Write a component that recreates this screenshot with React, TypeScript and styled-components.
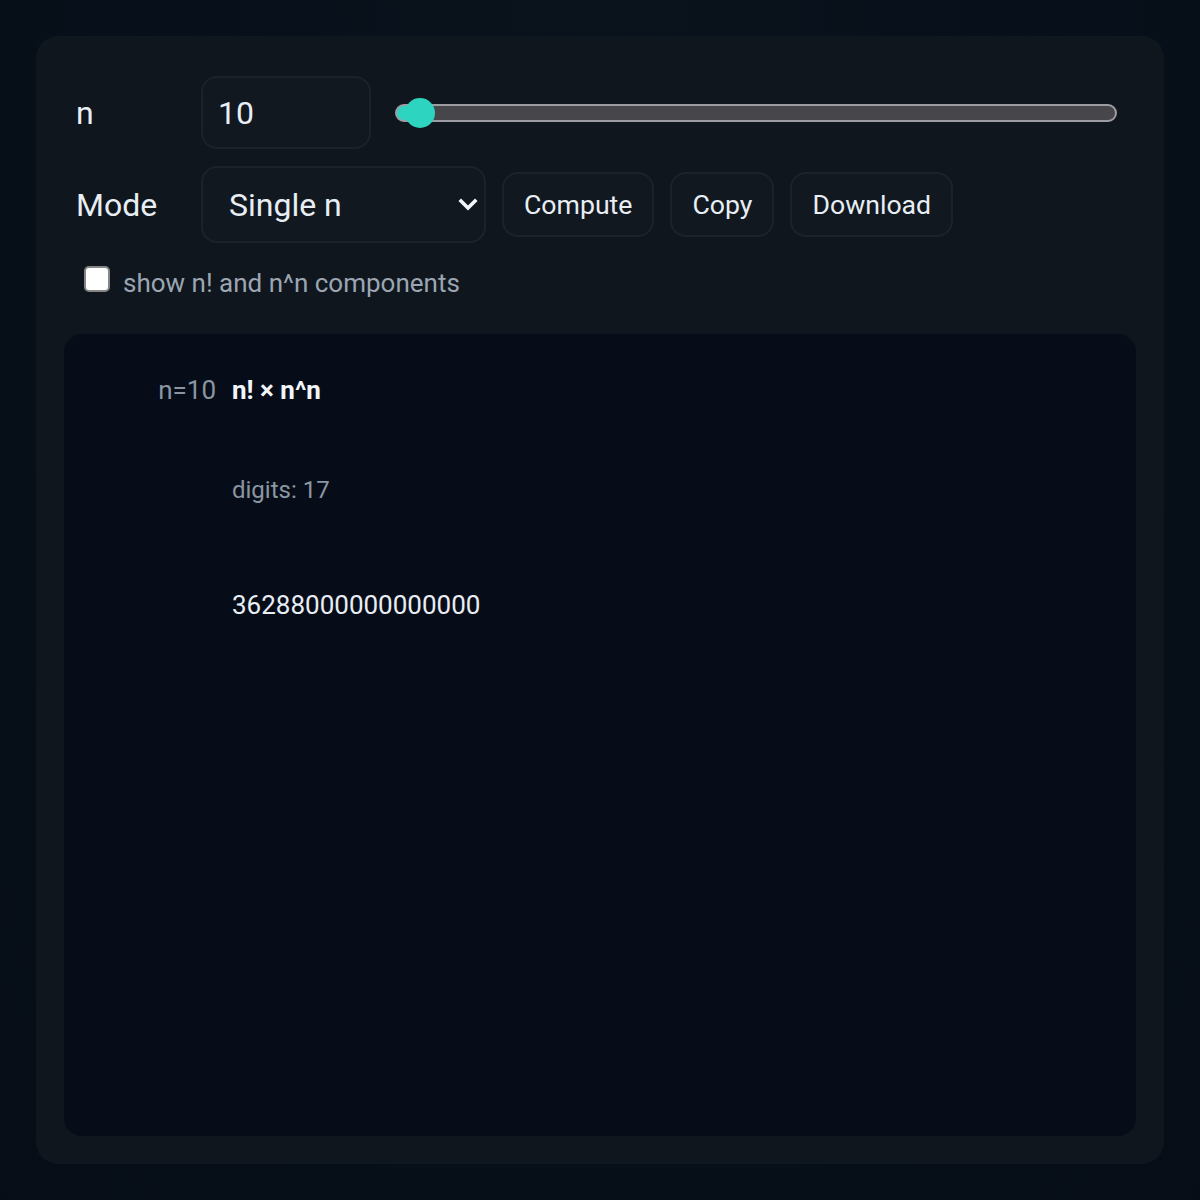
import React, { useState } from "react";
import styled, { createGlobalStyle } from "styled-components";

const GlobalStyle = createGlobalStyle`
  html, body {
    margin: 0;
    padding: 0;
    background: #07101a;
  }
  body {
    font-family: Roboto, "Noto Sans", "Liberation Sans", sans-serif;
    color: #e6edf3;
  }
  * { box-sizing: border-box; }
`;

const Page = styled.div`
  width: 1200px;
  height: 1200px;
  padding: 36px;
  background: radial-gradient(ellipse at 50% 0%, #0a131c 0%, #07101a 55%, #060d16 100%);
`;

const Card = styled.section`
  width: 1128px;
  height: 1128px;
  padding: 28px;
  border-radius: 22px;
  background: #0f161e;
  display: flex;
  flex-direction: column;
`;

const Controls = styled.div`
  padding: 12px 19px 0 12px;
  display: flex;
  flex-direction: column;
`;

const Row = styled.div<{ $gap?: number; $mt?: number }>`
  display: flex;
  align-items: center;
  gap: ${(p) => p.$gap ?? 18}px;
  margin-top: ${(p) => p.$mt ?? 0}px;
`;

const Label = styled.label<{ $w: number }>`
  width: ${(p) => p.$w}px;
  flex: none;
  font-size: 32px;
  color: #e8eef4;
`;

const NumberField = styled.input`
  width: 170px;
  height: 73px;
  flex: none;
  padding: 0 15px;
  border: 2px solid #1a232c;
  border-radius: 16px;
  background: #111820;
  color: #e8eef4;
  font-family: inherit;
  font-size: 32px;
  outline: none;
  margin-right: 6px;
`;

const Range = styled.input`
  flex: 1;
  -webkit-appearance: none;
  appearance: none;
  height: 32px;
  margin: 0;
  background: transparent;

  &::-webkit-slider-runnable-track {
    height: 18px;
    border-radius: 9px;
    border: 2px solid #9c9ca2;
    background: linear-gradient(
      to right,
      #2dd4bf 0,
      #2dd4bf var(--fill),
      #47474b var(--fill),
      #47474b 100%
    );
  }
  &::-webkit-slider-thumb {
    -webkit-appearance: none;
    appearance: none;
    width: 30px;
    height: 30px;
    border-radius: 50%;
    border: none;
    background: #2dd4bf;
    margin-top: -8px;
  }
`;

const SelectWrap = styled.div`
  position: relative;
  width: 285px;
  height: 77px;
  flex: none;
`;

const Select = styled.select`
  width: 100%;
  height: 100%;
  -webkit-appearance: none;
  appearance: none;
  padding: 0 40px 0 26px;
  border: 2px solid #1a232c;
  border-radius: 16px;
  background: #111820;
  color: #e8eef4;
  font-family: inherit;
  font-size: 32px;
  outline: none;
`;

const Chevron = styled.svg`
  position: absolute;
  right: 8px;
  top: 50%;
  margin-top: -7px;
  width: 20px;
  height: 14px;
  pointer-events: none;
`;

const Button = styled.button`
  height: 65px;
  padding: 0 20px;
  border: 2px solid #1a232c;
  border-radius: 16px;
  background: #111820;
  color: #e8eef4;
  font-family: inherit;
  font-size: 26.67px;
  cursor: pointer;
`;

const CheckRow = styled.label`
  display: flex;
  align-items: flex-start;
  margin-top: 23px;
  font-size: 26px;
  line-height: 34px;
  color: #9ba6b2;
`;

const Check = styled.input`
  -webkit-appearance: none;
  appearance: none;
  width: 26px;
  height: 26px;
  margin: 0 13px 0 8px;
  border: 2px solid #868686;
  border-radius: 5px;
  background: #ffffff;
  flex: none;
  &:checked {
    background: #2dd4bf;
    border-color: #2dd4bf;
  }
`;

const Output = styled.div`
  flex: 1;
  margin-top: 34px;
  border-radius: 18px;
  background: #070d18;
  padding: 39px 24px 24px;
  display: grid;
  grid-template-columns: 128px 1fr;
  column-gap: 16px;
  align-content: start;
`;

const RowTag = styled.div`
  text-align: right;
  font-size: 26px;
  line-height: 34px;
  color: #8b96a3;
`;

const Result = styled.div`
  display: flex;
  flex-direction: column;
`;

const Title = styled.div`
  font-size: 26px;
  line-height: 34px;
  font-weight: 700;
  color: #f2f6fa;
`;

const Meta = styled.div`
  margin-top: 68px;
  font-size: 24px;
  line-height: 30px;
  color: #8b96a3;
`;

const Value = styled.div`
  margin-top: 85px;
  font-size: 26px;
  line-height: 30px;
  color: #e8eef4;
  word-break: break-all;
`;

function factorial(n: number): bigint {
  let r = 1n;
  for (let i = 2n; i <= BigInt(n); i++) r *= i;
  return r;
}

export default function App() {
  const [n, setN] = useState(10);
  const [mode, setMode] = useState("single");
  const [showParts, setShowParts] = useState(false);
  const min = 1;
  const max = 800;

  const value = (factorial(n) * BigInt(n) ** BigInt(n)).toString();
  const pct = ((n - min) / (max - min)) * 100;
  const fill = `calc(15px + (100% - 30px) * ${pct / 100})`;

  return (
    <>
      <GlobalStyle />
      <Page>
        <Card>
          <Controls>
            <Row $gap={18}>
              <Label $w={107} htmlFor="n-input">n</Label>
              <NumberField
                id="n-input"
                type="number"
                value={n}
                onChange={(e) => setN(Math.max(min, Math.min(max, Number(e.target.value) || min)))}
              />
              <Range
                type="range"
                min={min}
                max={max}
                value={n}
                onChange={(e) => setN(Number(e.target.value))}
                style={{ ["--fill" as string]: fill } as React.CSSProperties}
              />
            </Row>
            <Row $gap={16} $mt={17}>
              <Label $w={109} htmlFor="mode">Mode</Label>
              <SelectWrap>
                <Select id="mode" value={mode} onChange={(e) => setMode(e.target.value)}>
                  <option value="single">Single n</option>
                  <option value="range">Range</option>
                </Select>
                <Chevron viewBox="0 0 20 14">
                  <polyline
                    points="3,3 10,10 17,3"
                    fill="none"
                    stroke="#f2f6fa"
                    strokeWidth="3.6"
                    strokeLinecap="square"
                  />
                </Chevron>
              </SelectWrap>
              <Button>Compute</Button>
              <Button>Copy</Button>
              <Button>Download</Button>
            </Row>
            <CheckRow>
              <Check
                type="checkbox"
                checked={showParts}
                onChange={(e) => setShowParts(e.target.checked)}
              />
              show n! and n^n components
            </CheckRow>
          </Controls>
          <Output>
            <RowTag>n={n}</RowTag>
            <Result>
              <Title>n! × n^n</Title>
              <Meta>digits: {value.length}</Meta>
              <Value>{value}</Value>
            </Result>
          </Output>
        </Card>
      </Page>
    </>
  );
}
